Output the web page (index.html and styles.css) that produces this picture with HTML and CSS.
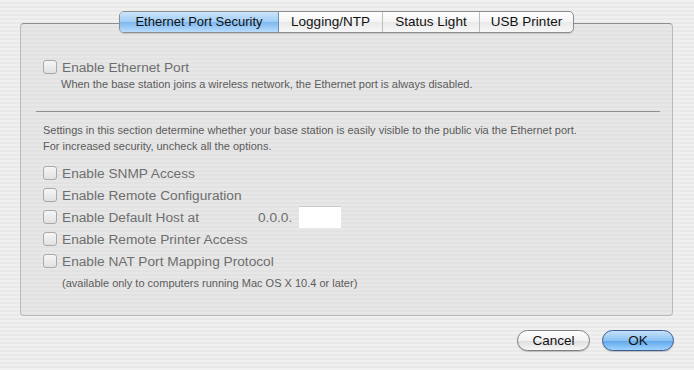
FILE: index.html
```html
<!DOCTYPE html>
<html lang="en">
<head>
    <meta charset="UTF-8">
    <title>Ethernet Port Security</title>
    <link rel="stylesheet" href="styles.css">
</head>
<body>
    <div class="sheet">
        <div class="tabs">
            <span class="tab active">Ethernet Port Security</span>
            <span class="tab logging">Logging/NTP</span>
            <span class="tab status">Status Light</span>
            <span class="tab last">USB Printer</span>
        </div>
        <div class="panel">
            <div class="row first">
                <span class="check"></span>
                <span class="label">Enable Ethernet Port</span>
            </div>
            <p class="note">When the base station joins a wireless network, the Ethernet port is always disabled.</p>
            <hr class="rule">
            <p class="intro">Settings in this section determine whether your base station is easily visible to the public via the Ethernet port.<br>For increased security, uncheck all the options.</p>
            <div class="row">
                <span class="check"></span>
                <span class="label">Enable SNMP Access</span>
            </div>
            <div class="row">
                <span class="check"></span>
                <span class="label">Enable Remote Configuration</span>
            </div>
            <div class="row">
                <span class="check"></span>
                <span class="label host">Enable Default Host at</span>
                <span class="label">0.0.0.</span>
                <span class="field"></span>
            </div>
            <div class="row">
                <span class="check"></span>
                <span class="label">Enable Remote Printer Access</span>
            </div>
            <div class="row">
                <span class="check"></span>
                <span class="label">Enable NAT Port Mapping Protocol</span>
            </div>
            <p class="note small">(available only to computers running Mac OS X 10.4 or later)</p>
        </div>
        <div class="buttons">
            <span class="btn cancel">Cancel</span>
            <span class="btn default">OK</span>
        </div>
    </div>
</body>
</html>
```

FILE: styles.css
```css
body {
    margin: 0;
    font-family: "Liberation Sans", Arial, sans-serif;
    background: repeating-linear-gradient(#f0f0f0 0 2px, #e9e9e9 2px 4px);
    width: 694px;
    height: 370px;
    overflow: hidden;
}
.sheet {
    padding-top: 11px;
}
.tabs {
    display: flex;
    width: 455px;
    box-sizing: border-box;
    margin: 0 0 -10px 119px;
    position: relative;
    z-index: 1;
    border: 1px solid #8d8d8d;
    border-radius: 5px;
    background: linear-gradient(#ffffff, #f4f4f4 50%, #e9e9e9 51%, #f7f7f7);
    box-shadow: 0 1px 1px rgba(0,0,0,0.15);
}
.tab {
    box-sizing: border-box;
    width: 104px;
    height: 20px;
    line-height: 20px;
    text-align: center;
    font-size: 13.5px;
    color: #111;
    border-right: 1px solid #bdbdbd;
}
.tab.active {
    width: 159px;
    font-size: 13px;
    background: linear-gradient(#cbe4fb, #a0cdf5 50%, #7db8ef 51%, #b8dcfc);
    border-radius: 4px 0 0 4px;
    border-right-color: #6d8fb5;
}
.tab.status {
    width: 97px;
}
.tab.last {
    flex: 1;
    border-right: none;
}
.panel {
    margin-left: 20px;
    width: 653px;
    height: 293px;
    border: 1px solid #b9b9b9;
    border-top-color: #8e8e8e;
    border-radius: 4px;
    background: repeating-linear-gradient(#e7e7e7 0 2px, #e2e2e2 2px 4px);
    box-sizing: border-box;
    padding: 0 14px 0 22px;
}
.row {
    display: flex;
    align-items: center;
    height: 22px;
}
.row.first {
    margin-top: 32px;
}
.check {
    width: 12px;
    height: 12px;
    border: 1px solid #a9a9a9;
    border-radius: 3px;
    background: linear-gradient(#f6f6f6, #e2e2e2);
    margin-right: 5px;
}
.label {
    font-size: 13.7px;
    color: #6e6e6e;
}
.host {
    width: 196px;
}
.field {
    width: 42px;
    height: 21px;
    margin-left: 7px;
    background: #fff;
    border-top: 1px solid #c8c8c8;
}
.note {
    margin: 0 0 0 18px;
    font-size: 11px;
    color: #5c5c5c;
}
.note.small {
    margin-top: 5px;
    margin-left: 19px;
}
.rule {
    margin: 21px 0 0 -7px;
    width: 624px;
    border: none;
    border-top: 1px solid #8f8f8f;
}
.intro {
    margin: 10px 0 8px 0;
    font-size: 11px;
    line-height: 16px;
    color: #5a5a5a;
}
.buttons {
    display: flex;
    justify-content: flex-end;
    gap: 12px;
    padding: 14px 20px 0 0;
}
.btn {
    width: 70px;
    height: 19px;
    line-height: 19px;
    text-align: center;
    font-size: 13.5px;
    color: #111;
    border: 1px solid #7f7f7f;
    border-radius: 11px;
    background: linear-gradient(#ffffff, #f1f1f1 50%, #dedede 51%, #f6f6f6);
    box-shadow: 0 1px 1px rgba(0,0,0,0.2);
}
.btn.cancel {
    width: 71px;
}
.btn.default {
    border-color: #3b5d93;
    background: linear-gradient(#c6e1fb, #8cc2f2 50%, #5ea6ec 51%, #9fd3fb);
}
```
